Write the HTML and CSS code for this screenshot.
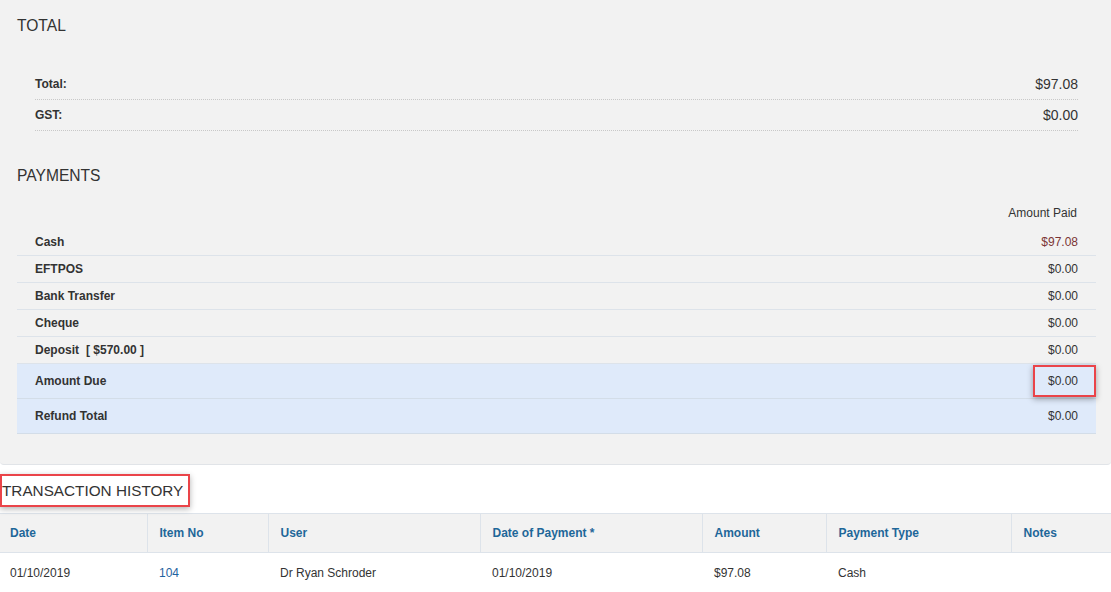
FILE: index.html
```html
<!DOCTYPE html>
<html>
<head>
<meta charset="utf-8">
<link rel="stylesheet" href="styles.css">
</head>
<body>
<div class="panel">
  <h2 class="section-title title-total">TOTAL</h2>
  <div class="totals">
    <div class="total-row"><span class="label">Total:</span><span class="total-value">$97.08</span></div>
    <div class="total-row"><span class="label">GST:</span><span class="total-value">$0.00</span></div>
  </div>
  <h2 class="section-title title-payments">PAYMENTS</h2>
  <div class="payments">
    <div class="pay-head">Amount Paid</div>
    <div class="pay-row"><span class="label">Cash</span><span class="value paid">$97.08</span></div>
    <div class="pay-row"><span class="label">EFTPOS</span><span class="value">$0.00</span></div>
    <div class="pay-row"><span class="label">Bank Transfer</span><span class="value">$0.00</span></div>
    <div class="pay-row"><span class="label">Cheque</span><span class="value">$0.00</span></div>
    <div class="pay-row"><span class="label">Deposit<span class="deposit">[ $570.00 ]</span></span><span class="value">$0.00</span></div>
    <div class="pay-row summary"><span class="label">Amount Due</span><span class="value highlight">$0.00</span></div>
    <div class="pay-row summary"><span class="label">Refund Total</span><span class="value">$0.00</span></div>
  </div>
</div>
<div class="history">
  <h2 class="history-title"><span class="marked">TRANSACTION HISTORY</span></h2>
  <table class="history-table">
    <colgroup>
      <col class="c1"><col class="c2"><col class="c3"><col class="c4"><col class="c5"><col class="c6"><col class="c7">
    </colgroup>
    <thead>
      <tr>
        <th>Date</th><th>Item No</th><th>User</th><th>Date of Payment *</th><th>Amount</th><th>Payment Type</th><th>Notes</th>
      </tr>
    </thead>
    <tbody>
      <tr>
        <td>01/10/2019</td><td class="link">104</td><td>Dr Ryan Schroder</td><td>01/10/2019</td><td>$97.08</td><td>Cash</td><td></td>
      </tr>
    </tbody>
  </table>
</div>
</body>
</html>
```

FILE: styles.css
```css
* { box-sizing: border-box; }
html, body { margin: 0; padding: 0; background: #ffffff; }
body {
  font-family: "Liberation Sans", Arial, sans-serif;
  color: #333333;
  font-size: 12px;
  overflow: hidden;
}
.panel {
  background: #f2f2f2;
  padding: 16px 15px 30px 17px;
  border-bottom: 1px solid #e1e4e8;
  border-radius: 0 0 4px 4px;
}
.section-title {
  margin: 0;
  font-size: 15.6px;
  font-weight: normal;
  line-height: 20px;
  color: #333333;
}
.totals {
  margin-top: 33px;
  padding: 0 18px;
}
.total-row {
  display: flex;
  justify-content: space-between;
  align-items: center;
  height: 31px;
  border-bottom: 1px dotted #c8c8c8;
}
.label {
  font-weight: bold;
  font-size: 12px;
  color: #333333;
}
.total-value {
  font-size: 14px;
  color: #333333;
}
.title-payments { margin-top: 35px; }
.payments { margin-top: 17px; }
.pay-head {
  text-align: right;
  line-height: 20px;
  padding-right: 19px;
  margin-bottom: 6px;
  color: #333333;
}
.pay-row {
  display: flex;
  justify-content: space-between;
  align-items: center;
  height: 27px;
  padding: 0 18px;
  border-bottom: 1px solid #dde3ea;
}
.value { color: #333333; }
.value.paid { color: #7b3535; }
.deposit { margin-left: 7px; }
.pay-row.summary {
  height: 35px;
  background: #dfeafa;
  border-bottom: 1px solid #d3dde8;
}
.highlight {
  display: flex;
  align-items: center;
  height: 32px;
  margin-right: -18px;
  padding: 0 16px 0 13px;
  border: 2px solid #ea4449;
  box-shadow: 0 2px 6px rgba(0, 0, 0, 0.35);
}
.history { padding-top: 9px; }
.history-title {
  margin: 0;
  font-size: 15.3px;
  font-weight: normal;
  line-height: 20px;
}
.marked {
  display: inline-flex;
  align-items: center;
  height: 33px;
  padding: 0 5px 0 0;
  border: 2px solid #ea4449;
  box-shadow: 0 2px 6px rgba(0, 0, 0, 0.3);
  color: #333333;
}
.history-table {
  margin-top: 6px;
  width: 1111px;
  border-collapse: collapse;
  table-layout: fixed;
}
.c1 { width: 147px; }
.c2 { width: 121px; }
.c3 { width: 212px; }
.c4 { width: 222px; }
.c5 { width: 124px; }
.c6 { width: 185px; }
.c7 { width: 100px; }
.history-table th {
  background: #f2f2f2;
  height: 39px;
  text-align: left;
  font-size: 12px;
  font-weight: bold;
  color: #1e6799;
  padding: 0 12px;
  border-top: 1px solid #dde3ea;
  border-bottom: 1px solid #dde3ea;
  border-left: 1px solid #dde3ea;
}
.history-table th:first-child { border-left: none; padding-left: 10px; }
.history-table td {
  height: 40px;
  padding: 0 12px;
  font-size: 12px;
  color: #333333;
}
.history-table td:first-child { padding-left: 10px; }
.history-table td.link { color: #1f62a0; }
```
